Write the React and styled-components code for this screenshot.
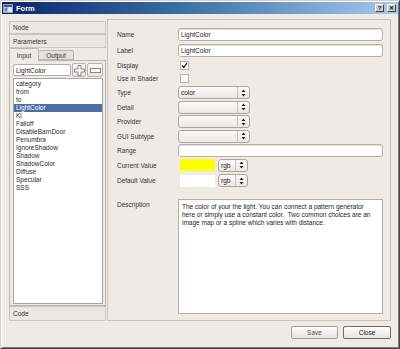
import React from "react";
import styled, { createGlobalStyle } from "styled-components";

const GlobalStyle = createGlobalStyle`
  html, body { margin: 0; padding: 0; background: #ffffff; }
  body { font-family: "Liberation Sans", Arial, sans-serif; }
  #root { width: 400px; height: 349px; }
`;

const Window = styled.div`
  width: 400px;
  height: 349px;
  box-sizing: border-box;
  border: 1px solid;
  border-color: #d4d0c8 #404040 #404040 #d4d0c8;
  box-shadow: inset 1px 1px 0 #ffffff, inset -1px -1px 0 #808080;
  padding: 1px;
  background: #eeebe7;
  display: flex;
  flex-direction: column;
  font-size: 6.5px;
  color: #2b2b2b;
`;

const TitleBar = styled.div`
  height: 12px;
  flex: none;
  background: linear-gradient(to right, #0a246a 0%, #3a6ea5 45%, #a6caf0 100%);
  display: flex;
  align-items: center;
  gap: 3px;
  padding: 0 2px 0 1px;
`;

const TitleText = styled.div`
  flex: 1;
  color: #ffffff;
  font-weight: bold;
  font-size: 7.5px;
  font-family: "Liberation Sans", Arial, sans-serif;
`;

const TitleButton = styled.div`
  width: 9px;
  height: 8px;
  box-sizing: border-box;
  background: #d4d0c8;
  border: 1px solid;
  border-color: #ffffff #404040 #404040 #ffffff;
  display: flex;
  align-items: center;
  justify-content: center;
  font-size: 6px;
  font-weight: bold;
  line-height: 1;
  color: #000;
`;

const Main = styled.div`
  flex: 1;
  min-height: 0;
  display: flex;
  gap: 1px;
  padding: 5px 7px 0 7px;
`;

const LeftPanel = styled.div`
  width: 97px;
  flex: none;
  display: flex;
  flex-direction: column;
  padding-top: 2px;
`;

const ToolBoxButton = styled.div`
  height: ${(p) => p.$h}px;
  flex: none;
  box-sizing: border-box;
  border: 1px solid #c9c5bf;
  background: #ebe8e3;
  display: flex;
  align-items: center;
  padding-left: 3px;
  color: #333;
`;

const TabBar = styled.div`
  height: 12px;
  flex: none;
  display: flex;
  align-items: flex-end;
`;

const Tab = styled.div`
  box-sizing: border-box;
  width: ${(p) => (p.$active ? 30 : 35)}px;
  height: ${(p) => (p.$active ? 13 : 10)}px;
  border: 1px solid #b9b5af;
  border-bottom: ${(p) => (p.$active ? "none" : "1px solid #b9b5af")};
  border-left: ${(p) => (p.$active ? "1px solid #b9b5af" : "none")};
  border-radius: 2px 2px 0 0;
  background: ${(p) => (p.$active ? "#eeebe7" : "#e4e1dc")};
  display: flex;
  align-items: center;
  justify-content: center;
  position: relative;
  z-index: ${(p) => (p.$active ? 1 : 0)};
  margin-bottom: ${(p) => (p.$active ? -1 : 0)}px;
  color: #333;
`;

const TabPane = styled.div`
  flex: 1;
  min-height: 0;
  box-sizing: border-box;
  border: 1px solid #b9b5af;
  padding: 2px 2px 1px 3px;
  display: flex;
  flex-direction: column;
  gap: 1px;
`;

const SearchRow = styled.div`
  height: 14px;
  flex: none;
  display: flex;
  align-items: center;
  gap: 1px;
`;

const LineEdit = styled.div`
  width: ${(p) => p.$w}px;
  height: 12px;
  box-sizing: border-box;
  border: 1px solid #b3afa9;
  border-radius: 2px;
  background: #ffffff;
  display: flex;
  align-items: center;
  padding-left: 2px;
  color: #222;
`;

const IconButton = styled.div`
  width: ${(p) => p.$w}px;
  height: 14px;
  box-sizing: border-box;
  border: 1px solid #b8b4ae;
  border-radius: 2px;
  background: linear-gradient(#fbfaf8, #e8e5e0);
  display: flex;
  align-items: center;
  justify-content: center;
`;

const List = styled.div`
  flex: 1;
  min-height: 0;
  box-sizing: border-box;
  border: 1px solid #a8a49e;
  background: #ffffff;
  padding-top: 1px;
  margin-right: 0;
`;

const ListItem = styled.div`
  height: 8px;
  line-height: 8px;
  padding-left: 2px;
  white-space: nowrap;
  background: ${(p) => (p.$selected ? "#4b6fa3" : "transparent")};
  color: ${(p) => (p.$selected ? "#ffffff" : "#2b2b2b")};
`;

const RightFrame = styled.div`
  flex: 1;
  box-sizing: border-box;
  border: 1px solid #c6c2bc;
  padding: 7px 7px 6px 9px;
  display: grid;
  grid-template-columns: 61px 1fr;
  grid-template-rows: 15px 16px 14px 13px 15px 14px 15px 14px 14px 16px 15px 11px 1fr;
`;

const Label = styled.div`
  align-self: ${(p) => (p.$top ? "start" : "center")};
  padding-top: ${(p) => (p.$top ? 2 : 0)}px;
  color: #333;
  white-space: nowrap;
`;

const Cell = styled.div`
  align-self: ${(p) => (p.$stretch ? "stretch" : "center")};
  display: flex;
  align-items: center;
  min-height: 0;
`;

const Spacer = styled.div`
  grid-column: 1 / -1;
`;

const TextField = styled.div`
  flex: 1;
  height: 13px;
  box-sizing: border-box;
  border: 1px solid #b3afa9;
  border-radius: 3px;
  background: #ffffff;
  box-shadow: inset 0 1px 0 #e2dfda;
  display: flex;
  align-items: center;
  padding-left: 2px;
  color: #222;
`;

const Combo = styled.div`
  width: ${(p) => p.$w}px;
  height: 13px;
  box-sizing: border-box;
  border: 1px solid #a9a59f;
  border-radius: 3px;
  background: linear-gradient(#fbfaf8, #ebe8e3);
  display: flex;
  align-items: stretch;
`;

const ComboText = styled.div`
  flex: 1;
  display: flex;
  align-items: center;
  padding-left: 2px;
  color: #222;
`;

const ComboArrow = styled.div`
  width: 11px;
  border-left: 1px solid #c4c0ba;
  display: flex;
  align-items: center;
  justify-content: center;
`;

const CheckBox = styled.div`
  width: 9px;
  height: 9px;
  box-sizing: border-box;
  margin-left: 2px;
  border: 1px solid #b5b1ab;
  background: #ffffff;
  display: flex;
  align-items: center;
  justify-content: center;
`;

const ColorRow = styled.div`
  display: flex;
  align-items: center;
  gap: 3px;
  margin-left: 2px;
`;

const Swatch = styled.div`
  width: 35px;
  height: 12px;
  background: ${(p) => p.$color};
`;

const DescBox = styled.div`
  flex: 1;
  align-self: stretch;
  box-sizing: border-box;
  border: 1px solid #b3afa9;
  background: #ffffff;
  padding: 3px 3px;
  line-height: 8px;
  white-space: pre-wrap;
  color: #222;
`;

const Footer = styled.div`
  height: 26px;
  flex: none;
  box-sizing: border-box;
  display: flex;
  justify-content: flex-end;
  align-items: flex-start;
  gap: 5px;
  padding: 5px 7px 0 7px;
`;

const PushButton = styled.div`
  width: ${(p) => p.$w}px;
  height: 13px;
  box-sizing: border-box;
  border: 1px solid ${(p) => (p.$default ? "#6f6b65" : "#a19d97")};
  border-radius: 2px;
  background: linear-gradient(#fdfdfc, #e6e3de);
  display: flex;
  align-items: center;
  justify-content: center;
  color: ${(p) => (p.$default ? "#222" : "#555")};
`;

const Arrows = () => (
  <svg width="5" height="8" viewBox="0 0 5 8">
    <path d="M2.5 0.5 L4.5 3 H0.5 Z" fill="#222" />
    <path d="M0.5 5 H4.5 L2.5 7.5 Z" fill="#222" />
  </svg>
);

const ComboBox = ({ w, text }) => (
  <Combo $w={w}>
    <ComboText>{text}</ComboText>
    <ComboArrow>
      <Arrows />
    </ComboArrow>
  </Combo>
);

const items = [
  "category",
  "from",
  "to",
  "LightColor",
  "Kl",
  "Falloff",
  "DisableBarnDoor",
  "Penumbra",
  "IgnoreShadow",
  "Shadow",
  "ShadowColor",
  "Diffuse",
  "Specular",
  "SSS",
];

const description =
  "The color of your the light. You can connect a pattern generator\nhere or simply use a constant color.  Two common choices are an\nimage map or a spline which varies with distance.";

export default function App() {
  return (
    <>
      <GlobalStyle />
      <Window>
        <TitleBar>
          <svg width="10" height="9" viewBox="0 0 10 9">
            <rect x="0.5" y="0.5" width="9" height="8" fill="#e8e8e8" stroke="#9aa4b0" />
            <rect x="1" y="1" width="8" height="2" fill="#2a5aa8" />
            <rect x="1.5" y="3.5" width="3" height="4" fill="#5f86c0" />
          </svg>
          <TitleText>Form</TitleText>
          <TitleButton>?</TitleButton>
          <TitleButton>✕</TitleButton>
        </TitleBar>
        <Main>
          <LeftPanel>
            <ToolBoxButton $h={13}>Node</ToolBoxButton>
            <ToolBoxButton $h={14}>Parameters</ToolBoxButton>
            <TabBar>
              <Tab $active>Input</Tab>
              <Tab>Output</Tab>
            </TabBar>
            <TabPane>
              <SearchRow>
                <LineEdit $w={59}>LightColor</LineEdit>
                <IconButton $w={14}>
                  <svg width="11" height="11" viewBox="0 0 11 11">
                    <path
                      d="M4 0.5 H7 V4 H10.5 V7 H7 V10.5 H4 V7 H0.5 V4 H4 Z"
                      fill="#ffffff"
                      stroke="#8a8781"
                    />
                  </svg>
                </IconButton>
                <IconButton $w={16}>
                  <svg width="11" height="5" viewBox="0 0 11 5">
                    <rect x="0.5" y="0.5" width="10" height="4" fill="#ffffff" stroke="#8a8781" />
                  </svg>
                </IconButton>
              </SearchRow>
              <List>
                {items.map((it) => (
                  <ListItem key={it} $selected={it === "LightColor"}>
                    {it}
                  </ListItem>
                ))}
              </List>
            </TabPane>
            <ToolBoxButton $h={15}>Code</ToolBoxButton>
          </LeftPanel>
          <RightFrame>
            <Label>Name</Label>
            <Cell>
              <TextField>LightColor</TextField>
            </Cell>
            <Label>Label</Label>
            <Cell>
              <TextField>LightColor</TextField>
            </Cell>
            <Label>Display</Label>
            <Cell>
              <CheckBox>
                <svg width="7" height="7" viewBox="0 0 7 7">
                  <path d="M1 3.5 L2.8 5.5 L6 0.8" fill="none" stroke="#111" strokeWidth="1.2" />
                </svg>
              </CheckBox>
            </Cell>
            <Label>Use in Shader</Label>
            <Cell>
              <CheckBox />
            </Cell>
            <Label>Type</Label>
            <Cell>
              <ComboBox w={72} text="color" />
            </Cell>
            <Label>Detail</Label>
            <Cell>
              <ComboBox w={72} text="" />
            </Cell>
            <Label>Provider</Label>
            <Cell>
              <ComboBox w={72} text="" />
            </Cell>
            <Label>GUI Subtype</Label>
            <Cell>
              <ComboBox w={72} text="" />
            </Cell>
            <Label>Range</Label>
            <Cell>
              <TextField />
            </Cell>
            <Label>Current Value</Label>
            <Cell>
              <ColorRow>
                <Swatch $color="#ffff00" />
                <ComboBox w={30} text="rgb" />
              </ColorRow>
            </Cell>
            <Label>Default Value</Label>
            <Cell>
              <ColorRow>
                <Swatch $color="#ffffff" />
                <ComboBox w={30} text="rgb" />
              </ColorRow>
            </Cell>
            <Spacer />
            <Label $top>Description</Label>
            <Cell $stretch>
              <DescBox>{description}</DescBox>
            </Cell>
          </RightFrame>
        </Main>
        <Footer>
          <PushButton $w={47}>Save</PushButton>
          <PushButton $w={48} $default>
            Close
          </PushButton>
        </Footer>
      </Window>
    </>
  );
}
